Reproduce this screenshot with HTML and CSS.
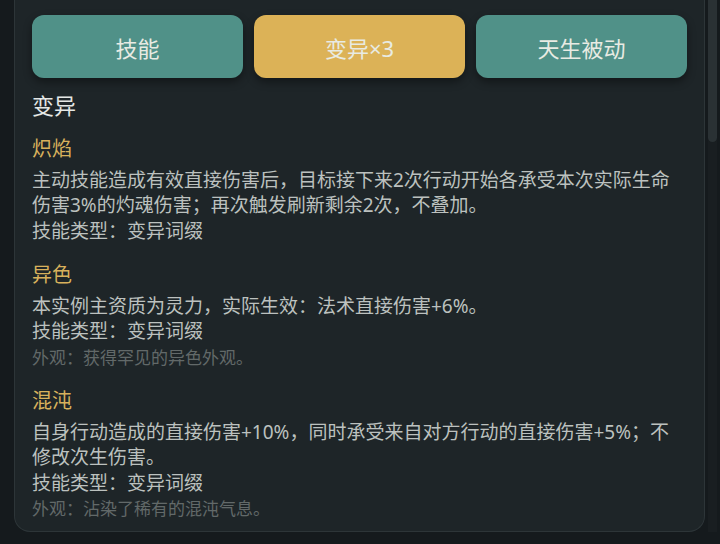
FILE: index.html
```html
<!DOCTYPE html>
<html lang="zh-CN">
<head>
<meta charset="utf-8">
<title>变异</title>
<link rel="stylesheet" href="styles.css">
</head>
<body>
<div class="page">
  <div class="panel">
    <div class="tabs">
      <div class="tab tab-teal">技能</div>
      <div class="tab tab-gold">变异×3</div>
      <div class="tab tab-teal">天生被动</div>
    </div>
    <div class="heading">变异</div>
    <div class="section first">
      <div class="title">炽焰</div>
      <div class="line">主动技能造成有效直接伤害后，目标接下来2次行动开始各承受本次实际生命<br>伤害3%的灼魂伤害；再次触发刷新剩余2次，不叠加。</div>
      <div class="line">技能类型：变异词缀</div>
    </div>
    <div class="section">
      <div class="title">异色</div>
      <div class="line">本实例主资质为灵力，实际生效：法术直接伤害+6%。</div>
      <div class="line">技能类型：变异词缀</div>
      <div class="line dim">外观：获得罕见的异色外观。</div>
    </div>
    <div class="section">
      <div class="title">混沌</div>
      <div class="line">自身行动造成的直接伤害+10%，同时承受来自对方行动的直接伤害+5%；不<br>修改次生伤害。</div>
      <div class="line">技能类型：变异词缀</div>
      <div class="line dim">外观：沾染了稀有的混沌气息。</div>
    </div>
  </div>
  <div class="scrollbar">
    <div class="thumb"></div>
  </div>
</div>
</body>
</html>
```

FILE: styles.css
```css
html, body {
  margin: 0;
  padding: 0;
  background: #151a1d;
}

body {
  font-family: "Noto Sans", "Noto Sans CJK SC", sans-serif;
  font-weight: 400;
}

.page {
  display: flex;
  width: 720px;
  height: 544px;
  overflow: hidden;
}

.panel {
  box-sizing: border-box;
  margin-left: 14px;
  width: 691px;
  height: 532px;
  background: #1e2528;
  border: 1px solid #2d3538;
  border-top: 0;
  border-radius: 0 0 16px 16px;
  padding: 15px 17px 0 17px;
}

.tabs {
  display: grid;
  grid-template-columns: 1fr 1fr 1fr;
  column-gap: 11px;
}

.tab {
  height: 63px;
  border-radius: 12px;
  display: flex;
  align-items: center;
  justify-content: center;
  font-size: 22px;
  color: #e8ebe3;
  box-shadow: 0 4px 9px rgba(0, 0, 0, 0.4);
}

.tab-teal {
  background: #509188;
}

.tab-gold {
  background: #dcb257;
}

.heading {
  margin-top: 12px;
  font-size: 22px;
  line-height: 30px;
  color: #e4e7e5;
}

.section {
  margin-top: 15.5px;
}

.section.first {
  margin-top: 13.5px;
}

.title {
  font-size: 20px;
  line-height: 30px;
  margin-bottom: 4px;
  color: #d8b15c;
}

.line {
  font-size: 19px;
  line-height: 25.5px;
  color: #bcc1bf;
  white-space: nowrap;
}

.line.dim {
  font-size: 17px;
  color: #626969;
}

.scrollbar {
  margin-left: 3px;
  width: 9px;
  height: 532px;
  background: #191e21;
}

.thumb {
  height: 142px;
  background: #2a3134;
  border-radius: 0 0 5px 5px;
}
```
